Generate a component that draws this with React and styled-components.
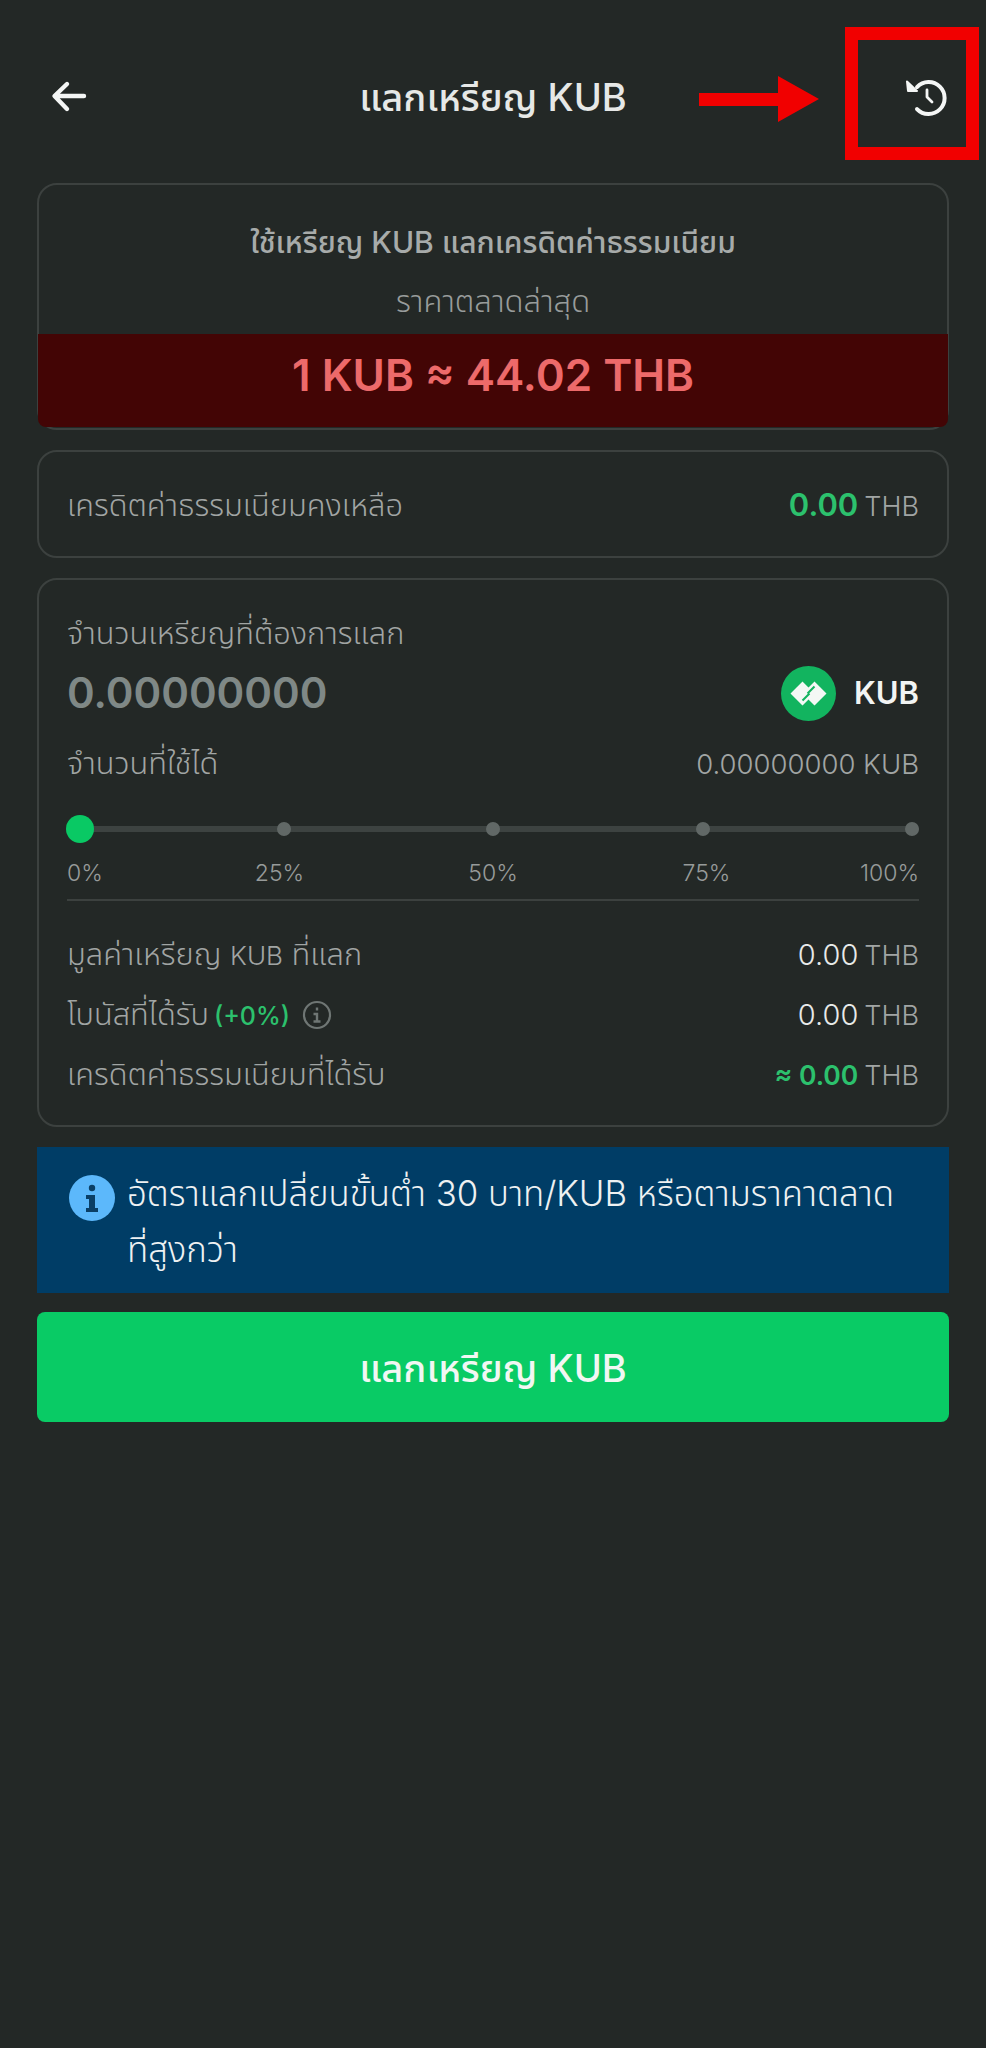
import React from "react";
import styled, { createGlobalStyle } from "styled-components";

const Global = createGlobalStyle`
  html, body { margin: 0; padding: 0; background: #232826; }
  body { font-family: "Inter", "Noto Sans Thai", "Noto Sans", "Liberation Sans", sans-serif; }
  * { box-sizing: border-box; }
`;

const Page = styled.div`
  position: relative;
  width: 986px;
  height: 2048px;
  background: #232826;
  padding: 0 37px;
  overflow: hidden;
`;
const Header = styled.header`
  height: 183px;
  margin: 0 -37px;
  padding: 13px 30px 0 40px;
  display: flex;
  align-items: center;
  justify-content: space-between;
`;
const HeaderTitle = styled.h1`
  margin: 0 10px 0 0;
  padding-top: 3px;
  font-size: 38px;
  font-weight: 500;
  color: #e6e8e7;
`;
const IconSlot = styled.svg`
  width: 56px;
  height: 56px;
  display: block;
  fill: none;
  stroke: #f4f6f5;
  stroke-width: ${p => p.$stroke || 4};
  stroke-linecap: round;
  stroke-linejoin: round;
`;
const Marker = styled.div`
  position: absolute;
  left: 845px;
  top: 27px;
  width: 134px;
  height: 133px;
  border: 13px solid #f10000;
`;
const Pointer = styled.svg`
  position: absolute;
  left: 699px;
  top: 76px;
`;
const Stack = styled.main`
  display: flex;
  flex-direction: column;
  gap: 20px;
`;
const Card = styled.section`
  border: 2px solid #3c413f;
  border-radius: 20px;
  overflow: hidden;
  line-height: 40px;
`;
const RateCard = styled(Card)`
  height: 247px;
  display: flex;
  flex-direction: column;
  align-items: center;
  overflow: visible;
`;
const RateTitle = styled.div`
  font-size: 30px;
  font-weight: 500;
  color: #a7abaa;
  margin-top: 37px;
`;
const RateSub = styled.div`
  font-size: 31px;
  font-weight: 300;
  color: #989c9b;
  margin-top: 19px;
`;
const RateBand = styled.div`
  align-self: stretch;
  height: 93px;
  margin: 13px -1px 0;
  padding-bottom: 11px;
  border-radius: 0 0 8px 8px;
  background: #430505;
  color: #ed6a6a;
  font-size: 44px;
  font-weight: 600;
  display: flex;
  align-items: center;
  justify-content: center;
`;
const BalanceCard = styled(Card)`
  height: 108px;
  padding: 7px 28px 0;
  display: flex;
  align-items: center;
`;
const Label = styled.span`
  font-size: 30.75px;
  font-weight: 300;
  color: #a1a5a4;
`;
const SmallLatin = styled.span`
  font-size: 26px;
`;
const Unit = styled.span`
  font-size: ${p => p.$size || 27}px;
  font-weight: 300;
  color: #a1a5a4;
  margin-left: 6px;
`;
const Green = styled.span`
  color: #2cc16d;
  font-weight: ${p => (p.$bold ? 600 : 500)};
  font-size: ${p => p.$size || 26.5}px;
`;
const Light = styled.span`
  color: #e8eae9;
  font-size: 29px;
  font-weight: 300;
`;
const ExchangeCard = styled(Card)`
  height: 549px;
  padding: 33px 28px 0;
`;
const Row = styled.div`
  display: flex;
  flex: 1;
  align-items: baseline;
  justify-content: space-between;
`;
const AmountRow = styled(Row)`
  margin-top: 7px;
  height: 56px;
  align-items: center;
`;
const Amount = styled.span`
  font-size: 42px;
  font-weight: 600;
  color: #7f8886;
`;
const Coin = styled.div`
  display: flex;
  align-items: center;
  gap: 18px;
  font-size: 31px;
  font-weight: 600;
  color: #f2f4f3;
`;
const AvailableRow = styled(Row)`
  margin-top: 22px;
`;
const Slider = styled.div`
  position: relative;
  height: 6px;
  margin-top: 42px;
  background: #3d4341;
  border-radius: 3px;
  display: flex;
  justify-content: space-between;
  align-items: center;
`;
const Stop = styled.span`
  width: 14px;
  height: 14px;
  border-radius: 50%;
  background: #616866;
`;
const Thumb = styled.span`
  position: absolute;
  left: -1px;
  top: -11px;
  width: 28px;
  height: 28px;
  border-radius: 50%;
  background: #09c964;
`;
const Ticks = styled.div`
  display: grid;
  grid-template-columns: 29px 60px 60px 60px 29px;
  justify-content: space-between;
  justify-items: center;
  margin-top: 25px;
  font-size: 23px;
  font-weight: 300;
  color: #979b9a;
  line-height: 32px;
  span:first-child { justify-self: start; }
  span:last-child { justify-self: end; }
`;
const Divider = styled.hr`
  border: 0;
  height: 2px;
  background: #3c413f;
  margin: 10px 0 0;
`;
const Summary = styled.div`
  display: flex;
  flex-direction: column;
  gap: 20px;
  margin-top: 33px;
`;
const SummaryLine = styled(Row)`
  flex: none;
  height: 40px;
`;
const Bonus = styled.span`
  display: inline-flex;
  align-items: baseline;
  gap: 5px;
`;
const BonusInfo = styled.svg`
  margin-left: 7px;
  width: 30px;
  height: 30px;
  align-self: center;
`;
const Notice = styled.aside`
  height: 146px;
  background: #003d66;
  padding: 18px 30px 0 32px;
  display: flex;
  gap: 12px;
  color: #eef1f2;
  font-size: 34.8px;
  font-weight: 300;
  line-height: 56px;
  align-items: flex-start;
  svg { flex: none; margin-top: 10px; }
`;
const Submit = styled.button`
  height: 110px;
  margin-top: -1px;
  border: 0;
  border-radius: 8px;
  padding-top: 8px;
  background: #09cb65;
  color: #f1f7f3;
  font: inherit;
  font-size: 38px;
  font-weight: 500;
`;

const SummaryRow = ({ left, right }) => (
  <SummaryLine>
    <Label>{left}</Label>
    <span>{right}</span>
  </SummaryLine>
);

export default function App() {
  return (
    <Page>
      <Global />
      <Header>
        <IconSlot viewBox="0 0 56 56" $stroke={4.4}>
          <path d="M44 26H15M27 14 14.5 26 27 39" />
        </IconSlot>
        <HeaderTitle>แลกเหรียญ KUB</HeaderTitle>
        <IconSlot viewBox="0 0 56 56">
          <path d="M17 39A16 16 0 1 0 17 17" />
          <path d="M7 11.5 8 21h9z" fill="#f4f6f5" strokeWidth="2" />
          <path d="M27 20v7l5 5" strokeWidth="2.8" />
        </IconSlot>
      </Header>
      <Stack>
        <RateCard>
          <RateTitle>ใช้เหรียญ KUB แลกเครดิตค่าธรรมเนียม</RateTitle>
          <RateSub>ราคาตลาดล่าสุด</RateSub>
          <RateBand>1 KUB ≈ 44.02 THB</RateBand>
        </RateCard>
        <BalanceCard>
          <Row>
            <Label>เครดิตค่าธรรมเนียมคงเหลือ</Label>
            <span><Green $bold $size={31}>0.00</Green><Unit>THB</Unit></span>
          </Row>
        </BalanceCard>
        <ExchangeCard>
          <Label>จำนวนเหรียญที่ต้องการแลก</Label>
          <AmountRow>
            <Amount>0.00000000</Amount>
            <Coin>
              <svg width="55" height="55" viewBox="-27.5 -27.5 55 55">
                <circle r="27.5" fill="#12b45f" />
                <path d="M-18 0-6-12 0-6 6-12 18 0 6 12 0 6-6 12z" fill="#f4f8f5" />
                <path d="M-6 7 1 0M6-7-1 0" stroke="#12b45f" strokeWidth="2" fill="none" />
              </svg>
              KUB
            </Coin>
          </AmountRow>
          <AvailableRow>
            <Label>จำนวนที่ใช้ได้</Label>
            <Unit $size={27.5}>0.00000000 KUB</Unit>
          </AvailableRow>
          <Slider>
            <Stop /><Stop /><Stop /><Stop /><Stop />
            <Thumb />
          </Slider>
          <Ticks>
            <span>0%</span><span>25%</span><span>50%</span><span>75%</span><span>100%</span>
          </Ticks>
          <Divider />
          <Summary>
            <SummaryRow left={<>มูลค่าเหรียญ <SmallLatin>KUB</SmallLatin> ที่แลก</>} right={<><Light>0.00</Light><Unit>THB</Unit></>} />
            <SummaryLine>
              <Bonus>
                <Label>โบนัสที่ได้รับ</Label>
                <Green $size={25}>(+0%)</Green>
                <BonusInfo viewBox="0 0 30 30" fill="none">
                  <circle cx="15" cy="15" r="13" stroke="#6f7674" strokeWidth="2.2" />
                  <path d="M15 7.5v3M11.5 14H15v7M11.5 21.5h7" stroke="#6f7674" strokeWidth="2.4" />
                </BonusInfo>
              </Bonus>
              <span><Light>0.00</Light><Unit>THB</Unit></span>
            </SummaryLine>
            <SummaryRow left="เครดิตค่าธรรมเนียมที่ได้รับ" right={<><Green $bold>≈ 0.00</Green><Unit>THB</Unit></>} />
          </Summary>
        </ExchangeCard>
        <Notice>
          <svg width="46" height="46" viewBox="0 0 46 46">
            <circle cx="23" cy="23" r="23" fill="#5cb8fb" />
            <circle cx="23" cy="13" r="3.2" fill="#0a3f66" />
            <path d="M17 20h9v13h3v4H17v-4h3v-9h-3z" fill="#0a3f66" />
          </svg>
          <span>อัตราแลกเปลี่ยนขั้นต่ำ 30 บาท/KUB หรือตามราคาตลาด<br />ที่สูงกว่า</span>
        </Notice>
        <Submit>แลกเหรียญ KUB</Submit>
      </Stack>
      <Pointer width="120" height="46" viewBox="0 0 120 46">
        <path d="M0 17h79V0l41 23-41 23V30H0z" fill="#f10000" />
      </Pointer>
      <Marker />
    </Page>
  );
}
